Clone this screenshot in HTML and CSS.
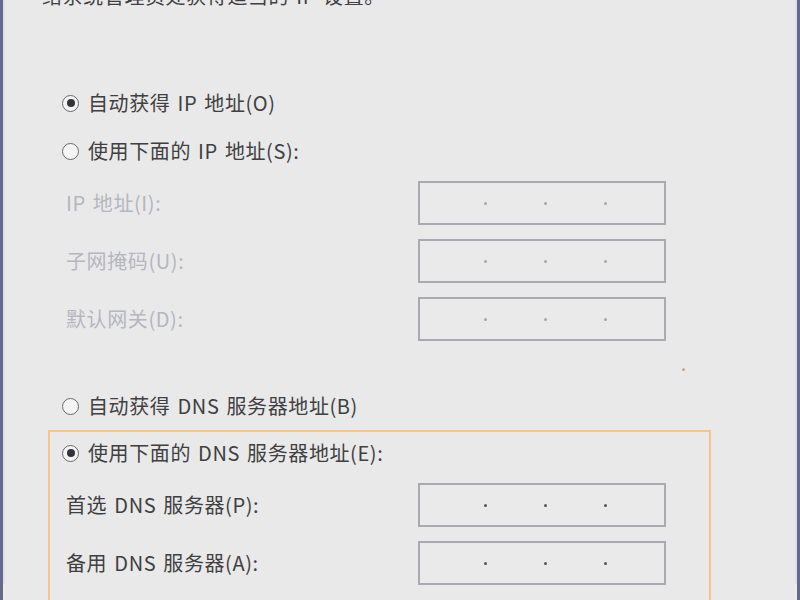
FILE: index.html
```html
<!DOCTYPE html>
<html lang="zh-CN">
<head>
<meta charset="utf-8">
<title>Internet 协议版本 4 (TCP/IPv4) 属性</title>
<link rel="stylesheet" href="styles.css">
</head>
<body>
<div class="window">
  <div class="frame">
    <p class="intro">络系统管理员处获得适当的 IP 设置。</p>

    <div class="radio-row outer first">
      <span class="radio checked"></span>
      <span class="label">自动获得 IP 地址(O)</span>
    </div>
    <div class="radio-row outer">
      <span class="radio"></span>
      <span class="label">使用下面的 IP 地址(S):</span>
    </div>

    <div class="fields outer-fields">
      <div class="field disabled">
        <span class="field-label">IP 地址(I):</span>
        <div class="ipbox"><i class="dot"></i><i class="dot"></i><i class="dot"></i></div>
      </div>
      <div class="field disabled">
        <span class="field-label">子网掩码(U):</span>
        <div class="ipbox"><i class="dot"></i><i class="dot"></i><i class="dot"></i></div>
      </div>
      <div class="field disabled">
        <span class="field-label">默认网关(D):</span>
        <div class="ipbox"><i class="dot"></i><i class="dot"></i><i class="dot"></i></div>
      </div>
    </div>

    <div class="radio-row outer dns-auto">
      <span class="radio"></span>
      <span class="label">自动获得 DNS 服务器地址(B)</span>
      <i class="speck"></i>
    </div>

    <div class="dns-group">
      <div class="radio-row inner">
        <span class="radio checked"></span>
        <span class="label">使用下面的 DNS 服务器地址(E):</span>
      </div>
      <div class="fields dns-fields">
        <div class="field">
          <span class="field-label">首选 DNS 服务器(P):</span>
          <div class="ipbox"><i class="dot"></i><i class="dot"></i><i class="dot"></i></div>
        </div>
        <div class="field">
          <span class="field-label">备用 DNS 服务器(A):</span>
          <div class="ipbox"><i class="dot"></i><i class="dot"></i><i class="dot"></i></div>
        </div>
      </div>
    </div>
  </div>
</div>
</body>
</html>
```

FILE: styles.css
```css
html, body {
  margin: 0;
  padding: 0;
  background: #e9e9e9;
}

.window {
  width: 800px;
  height: 600px;
  overflow: hidden;
  box-sizing: border-box;
  background: #e9e9e9;
  border-left: 3px solid #666a88;
  border-right: 3px solid #666a88;
  font-family: "Noto Sans CJK SC", "Noto Sans", sans-serif;
  font-size: 20px;
  letter-spacing: 0.6px;
  word-spacing: 2px;
  color: #404042;
}

.frame {
  height: 100%;
  box-sizing: border-box;
  border-left: 2px solid #dcdff0;
  border-right: 2px solid #dcdff0;
  padding-left: 43px;
}

.intro {
  margin: -16px 0 0 -6px;
  line-height: 24px;
  white-space: nowrap;
}

.radio-row {
  position: relative;
  display: flex;
  align-items: center;
  height: 48px;
  padding-left: 12px;
}

.radio-row.outer {
  padding-left: 14px;
}

.radio-row.first {
  margin-top: 71px;
}

.radio {
  width: 17px;
  height: 17px;
  box-sizing: border-box;
  border: 1.5px solid #6a6a6a;
  border-radius: 50%;
  background: #f4f4f4;
  display: flex;
  align-items: center;
  justify-content: center;
  flex: none;
}

.radio.checked::after {
  content: "";
  width: 8px;
  height: 8px;
  border-radius: 50%;
  background: #333338;
}

.label {
  margin-left: 9px;
  line-height: 24px;
  white-space: nowrap;
}

.fields {
  display: flex;
  flex-direction: column;
  gap: 14px;
  margin-top: 6px;
  padding-left: 16px;
}

.fields.outer-fields {
  padding-left: 18px;
}

.field {
  display: flex;
  align-items: center;
  height: 44px;
}

.field-label {
  width: 352px;
  flex: none;
  line-height: 24px;
  white-space: nowrap;
}

.field.disabled .field-label {
  color: #b6b6bf;
}

.ipbox {
  width: 248px;
  height: 44px;
  box-sizing: border-box;
  border: 2px solid #a9a9b0;
  background: #eaeaea;
  display: flex;
  align-items: center;
  gap: 57px;
  padding-left: 64px;
}

.dot {
  width: 3px;
  height: 3px;
  border-radius: 50%;
  background: #555559;
}

.field.disabled .dot {
  background: #a8a8ac;
}

.dns-auto {
  margin-top: 41px;
}

.speck {
  position: absolute;
  left: 634px;
  top: -14px;
  width: 3px;
  height: 3px;
  border-radius: 50%;
  background: #c8a888;
}

.dns-group {
  width: 663px;
  height: 200px;
  box-sizing: border-box;
  margin-top: 0;
  border: 2px solid #f0c699;
  box-shadow: inset 0 0 0 1px #f6e8d8;
}

.radio-row.inner {
  height: 42px;
  padding-left: 12px;
}

.dns-fields {
  margin-top: 9px;
  padding-left: 16px;
}
```
